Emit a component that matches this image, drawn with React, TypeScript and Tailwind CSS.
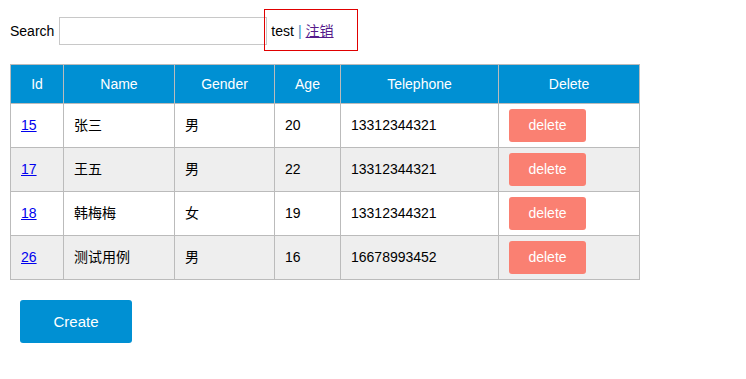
import React from "react";

const rows = [
  { id: "15", name: "张三", gender: "男", age: "20", tel: "13312344321" },
  { id: "17", name: "王五", gender: "男", age: "22", tel: "13312344321" },
  { id: "18", name: "韩梅梅", gender: "女", age: "19", tel: "13312344321" },
  { id: "26", name: "测试用例", gender: "男", age: "16", tel: "16678993452" },
];

export default function App() {
  return (
    <div
      className="min-h-[379px] bg-white text-[14px] leading-[21px] text-black"
      style={{ fontFamily: '"Liberation Sans", Arial, "Noto Sans CJK SC", sans-serif' }}
    >
      <div className="flex items-start pl-[10px] pt-[9px] h-[50px]">
        <span className="mr-[5px] mt-[12px]">Search</span>
        <input className="w-[208px] h-[28px] border border-[#c8c8c8] mt-[8px] outline-none" />
        <div className="ml-[-3px] w-[94px] h-[42px] border border-[#e00000] flex items-start pl-[6px] pt-[11px]">
          <span>test</span>
          <span className="text-[#3a8fc4] mx-[4px]">|</span>
          <a href="#" className="text-[#551a8b] underline">注销</a>
        </div>
      </div>
      <table className="ml-[10px] mt-[14px] border-collapse">
        <thead>
          <tr className="bg-[#0090d3] text-white">
            <th className="w-[53px] h-[39px] border border-[#bbbbbb] font-normal">Id</th>
            <th className="w-[111px] border border-[#bbbbbb] font-normal">Name</th>
            <th className="w-[100px] border border-[#bbbbbb] font-normal">Gender</th>
            <th className="w-[66px] border border-[#bbbbbb] font-normal">Age</th>
            <th className="w-[158px] border border-[#bbbbbb] font-normal">Telephone</th>
            <th className="w-[141px] border border-[#bbbbbb] font-normal">Delete</th>
          </tr>
        </thead>
        <tbody>
          {rows.map((r, i) => (
            <tr key={r.id} className={i % 2 === 1 ? "bg-[#eeeeee]" : "bg-white"}>
              <td className="h-[44px] border border-[#bbbbbb] pl-[10px]">
                <a href="#" className="text-[#0000ee] underline">{r.id}</a>
              </td>
              <td className="border border-[#bbbbbb] pl-[10px]">{r.name}</td>
              <td className="border border-[#bbbbbb] pl-[10px]">{r.gender}</td>
              <td className="border border-[#bbbbbb] pl-[10px]">{r.age}</td>
              <td className="border border-[#bbbbbb] pl-[10px]">{r.tel}</td>
              <td className="border border-[#bbbbbb] pl-[10px]">
                <button className="w-[77px] h-[33px] rounded-[3px] bg-[#fa8072] text-white">delete</button>
              </td>
            </tr>
          ))}
        </tbody>
      </table>
      <button className="ml-[20px] mt-[20px] w-[112px] h-[43px] rounded-[3px] bg-[#0090d3] text-white text-[15px] leading-[20px]">
        Create
      </button>
    </div>
  );
}
